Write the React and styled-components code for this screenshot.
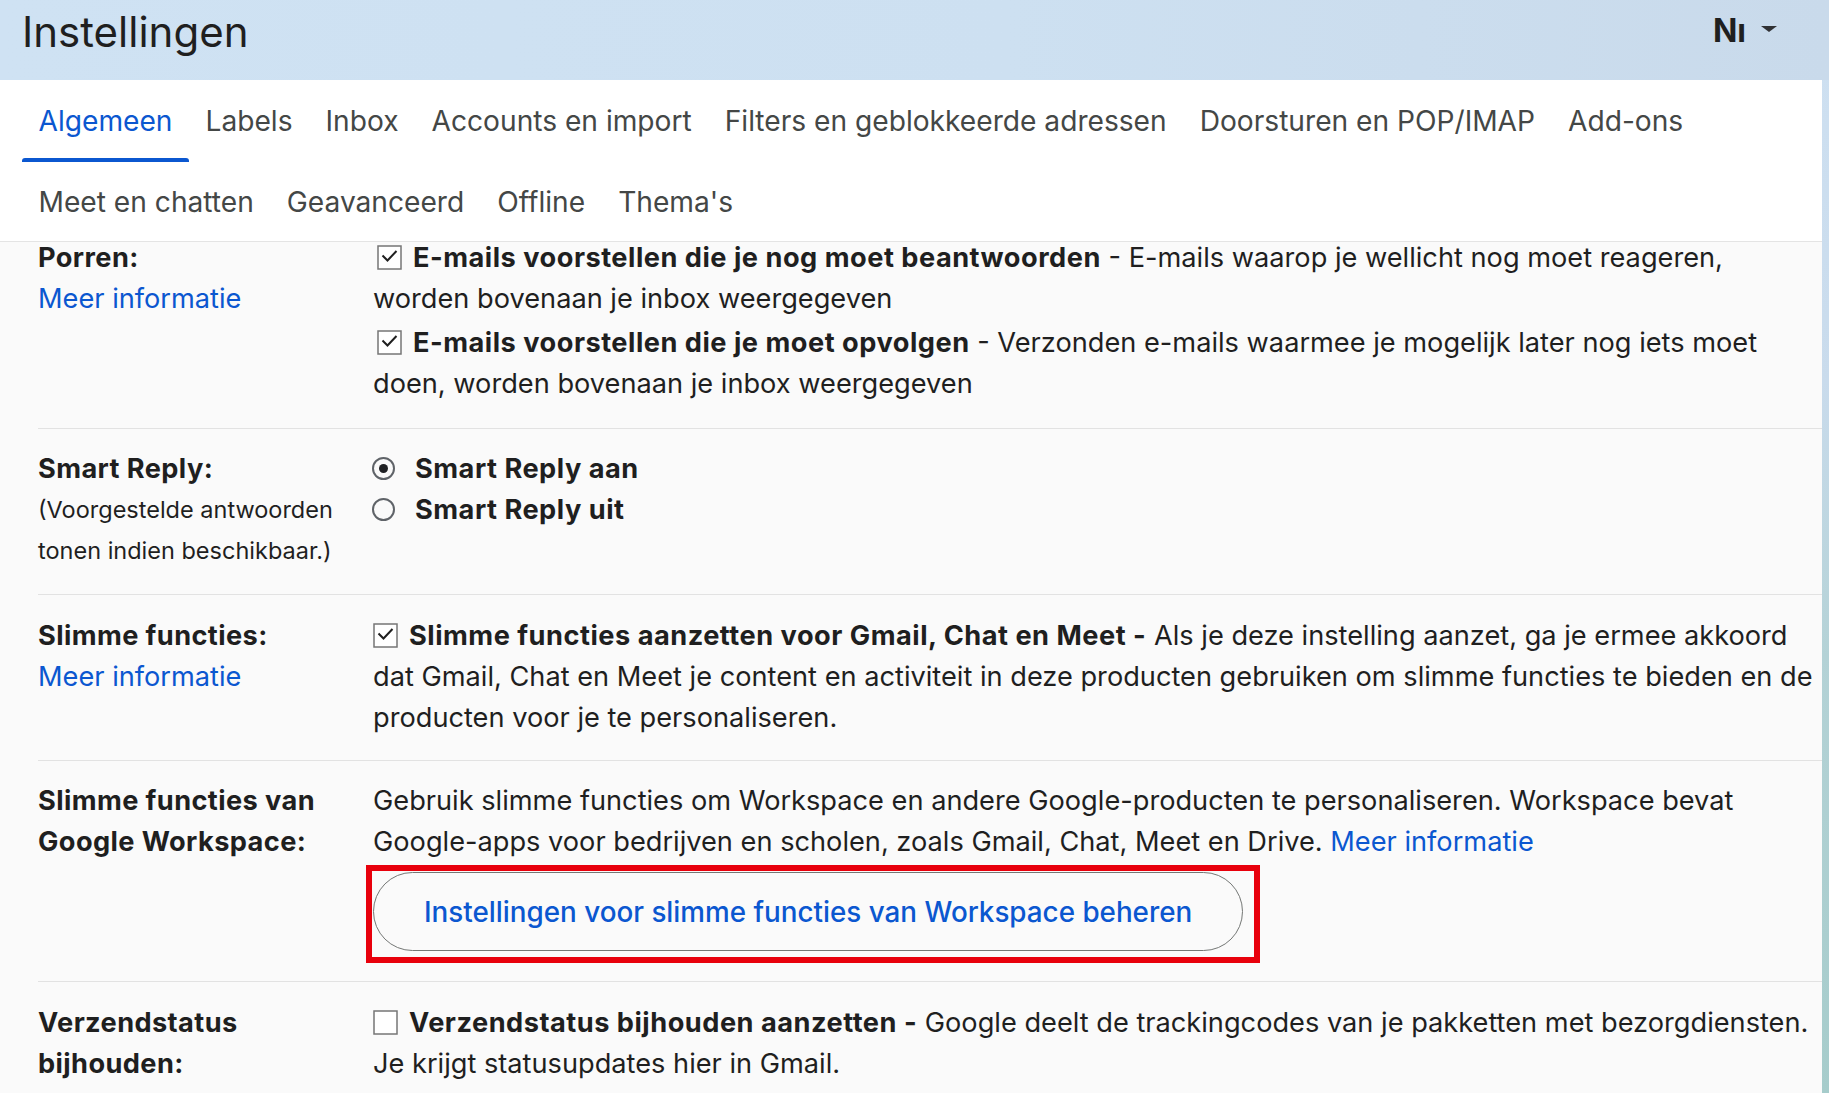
import React from 'react';
import styled, { createGlobalStyle } from 'styled-components';

const GlobalStyle = createGlobalStyle`
  html, body {
    margin: 0;
    padding: 0;
    height: 100%;
  }
  body {
    font-family: Inter, Roboto, "Noto Sans", sans-serif;
    color: #1f1f1f;
    overflow: hidden;
  }
  #root {
    height: 100%;
  }
`;

const Page = styled.div`
  display: flex;
  flex-direction: column;
  height: 100vh;
  background: linear-gradient(180deg, #cfe1f2 0%, #c9dbec 35%, #b4d2d6 60%, #a6cccb 100%);
`;

const Header = styled.header`
  flex: none;
  height: 80px;
  display: flex;
  align-items: flex-start;
  justify-content: space-between;
  padding: 0 52px 0 22px;
  background: linear-gradient(90deg, #cfe2f3 0%, #cde0f1 55%, #c9daeb 100%);
`;

const Title = styled.h1`
  margin: 0;
  padding-top: 11px;
  font-size: 42px;
  line-height: 42px;
  font-weight: 400;
  color: #1f1f1f;
`;

const Account = styled.div`
  display: flex;
  align-items: center;
  gap: 15px;
  padding-top: 13px;
  font-size: 32px;
  line-height: 36px;
  font-weight: 700;
  color: #1f1f1f;
`;

const Caret = styled.span`
  width: 0;
  height: 0;
  border-left: 8px solid transparent;
  border-right: 8px solid transparent;
  border-top: 6px solid #303134;
  margin-top: -4px;
`;

const Panel = styled.main`
  flex: 1;
  min-height: 0;
  margin-right: 7px;
  background: #fff;
  display: flex;
  flex-direction: column;
  overflow: hidden;
`;

const TabBar = styled.nav`
  flex: none;
  display: flex;
  flex-direction: column;
  padding-left: 22px;
  border-bottom: 1px solid #e4e4e4;
`;

const TabRow = styled.div`
  display: flex;
  height: ${(p) => p.$height}px;
`;

const Tab = styled.div`
  position: relative;
  display: flex;
  align-items: center;
  padding: 0 16.5px;
  font-size: 28.15px;
  color: ${(p) => (p.$active ? '#0b57d0' : '#444746')};
  white-space: nowrap;

  &::after {
    content: '';
    display: ${(p) => (p.$active ? 'block' : 'none')};
    position: absolute;
    left: 0;
    right: 0;
    bottom: 0;
    height: 4px;
    border-radius: 3px 3px 0 0;
    background: #0b57d0;
  }
`;

const Content = styled.section`
  flex: 1;
  min-height: 0;
  overflow: hidden;
  padding-left: 38px;
  background: #fafafa;
`;

const List = styled.div`
  margin-top: -5px;
`;

const Row = styled.div`
  display: grid;
  grid-template-columns: 335px 1fr;
  padding: ${(p) => p.$pad || '19px 0 23px'};
  border-bottom: 1px solid #e2e2e2;
  font-size: 27.2px;
  line-height: 41px;
`;

const Label = styled.div`
  display: flex;
  flex-direction: column;
  padding-right: 20px;
`;

const LabelTitle = styled.span`
  font-weight: 700;
  letter-spacing: 0.4px;
  color: #1f1f1f;
`;

const LabelNote = styled.span`
  font-size: 23.5px;
  color: #1f1f1f;
`;

const Link = styled.a`
  color: #0b57d0;
  text-decoration: none;
  cursor: pointer;
`;

const Value = styled.div`
  min-width: 0;
  padding-right: 4px;
  color: #1f1f1f;
`;

const Para = styled.p`
  margin: 0 0 ${(p) => p.$gap || 0}px;
`;

const B = styled.b`
  font-weight: 700;
  letter-spacing: 0.5px;
`;

const Box = styled.svg`
  display: inline-block;
  width: 25px;
  height: 25px;
  vertical-align: -3px;
  margin-left: ${(p) => p.$indent || 0}px;
  margin-right: 11px;
`;

const RadioLine = styled.label`
  display: flex;
  align-items: center;
  gap: 20px;
  font-weight: 700;
  letter-spacing: 0.5px;
`;

const Radio = styled.span`
  flex: none;
  width: 23px;
  height: 23px;
  box-sizing: border-box;
  margin-left: -1px;
  border: 2px solid #5f6368;
  border-radius: 50%;
  display: flex;
  align-items: center;
  justify-content: center;

  &::after {
    content: '';
    display: ${(p) => (p.$checked ? 'block' : 'none')};
    width: 9px;
    height: 9px;
    border-radius: 50%;
    background: #202124;
  }
`;

const ButtonWrap = styled.div`
  position: relative;
  display: inline-block;
  margin-top: 10px;
`;

const PillButton = styled.button`
  display: inline-flex;
  align-items: center;
  height: 79px;
  padding: 0 50px;
  box-sizing: border-box;
  border: 1px solid #747775;
  border-radius: 40px;
  background: transparent;
  font-family: inherit;
  font-size: 27.8px;
  font-weight: 500;
  color: #0b57d0;
  cursor: pointer;
`;

const Highlight = styled.span`
  position: absolute;
  left: -7px;
  top: -7px;
  right: -17px;
  bottom: -12px;
  border: 6px solid #e8000c;
  pointer-events: none;
`;

const Check = ({ checked, indent }) => (
  <Box viewBox="0 0 25 25" $indent={indent}>
    <rect x="1" y="1" width="23" height="23" fill="#fff" stroke="#767676" strokeWidth="1.5" />
    {checked && (
      <path d="M5.5 10.5 L10.5 15.5 L19.5 6" fill="none" stroke="#1f1f1f" strokeWidth="2" />
    )}
  </Box>
);

const tabsTop = ['Algemeen', 'Labels', 'Inbox', 'Accounts en import', 'Filters en geblokkeerde adressen', 'Doorsturen en POP/IMAP', 'Add-ons'];
const tabsBottom = ['Meet en chatten', 'Geavanceerd', 'Offline', "Thema's"];

export default function App() {
  return (
    <Page>
      <GlobalStyle />
      <Header>
        <Title>Instellingen</Title>
        <Account>
          Nı
          <Caret />
        </Account>
      </Header>
      <Panel>
        <TabBar>
          <TabRow $height={82}>
            {tabsTop.map((t, i) => (
              <Tab key={t} $active={i === 0}>{t}</Tab>
            ))}
          </TabRow>
          <TabRow $height={79}>
            {tabsBottom.map((t) => (
              <Tab key={t}>{t}</Tab>
            ))}
          </TabRow>
        </TabBar>
        <Content>
          <List>
            <Row $pad="0 0 24px">
              <Label>
                <LabelTitle>Porren:</LabelTitle>
                <Link>Meer informatie</Link>
              </Label>
              <Value>
                <Para $gap={3}>
                  <Check checked indent={4} />
                  <B>E-mails voorstellen die je nog moet beantwoorden</B> - E-mails waarop je wellicht nog moet reageren, worden bovenaan je inbox weergegeven
                </Para>
                <Para>
                  <Check checked indent={4} />
                  <B>E-mails voorstellen die je moet opvolgen</B> - Verzonden e-mails waarmee je mogelijk later nog iets moet doen, worden bovenaan je inbox weergegeven
                </Para>
              </Value>
            </Row>

            <Row>
              <Label>
                <LabelTitle>Smart Reply:</LabelTitle>
                <LabelNote>(Voorgestelde antwoorden</LabelNote>
                <LabelNote>tonen indien beschikbaar.)</LabelNote>
              </Label>
              <Value>
                <RadioLine>
                  <Radio $checked />
                  Smart Reply aan
                </RadioLine>
                <RadioLine>
                  <Radio />
                  Smart Reply uit
                </RadioLine>
              </Value>
            </Row>

            <Row $pad="20px 0 22px">
              <Label>
                <LabelTitle>Slimme functies:</LabelTitle>
                <Link>Meer informatie</Link>
              </Label>
              <Value>
                <Para>
                  <Check checked />
                  <B>Slimme functies aanzetten voor Gmail, Chat en Meet -</B> Als je deze instelling aanzet, ga je ermee akkoord dat Gmail, Chat en Meet je content en activiteit in deze producten gebruiken om slimme functies te bieden en de producten voor je te personaliseren.
                </Para>
              </Value>
            </Row>

            <Row $pad="19px 0 30px">
              <Label>
                <LabelTitle>Slimme functies van Google Workspace:</LabelTitle>
              </Label>
              <Value>
                <Para>
                  Gebruik slimme functies om Workspace en andere Google-producten te personaliseren. Workspace bevat Google-apps voor bedrijven en scholen, zoals Gmail, Chat, Meet en Drive. <Link>Meer informatie</Link>
                </Para>
                <ButtonWrap>
                  <PillButton>Instellingen voor slimme functies van Workspace beheren</PillButton>
                  <Highlight />
                </ButtonWrap>
              </Value>
            </Row>

            <Row $pad="20px 0 23px">
              <Label>
                <LabelTitle>Verzendstatus bijhouden:</LabelTitle>
                <Link>Meer informatie</Link>
              </Label>
              <Value>
                <Para>
                  <Check />
                  <B>Verzendstatus bijhouden aanzetten -</B> Google deelt de trackingcodes van je pakketten met bezorgdiensten. Je krijgt statusupdates hier in Gmail.
                </Para>
              </Value>
            </Row>
          </List>
        </Content>
      </Panel>
    </Page>
  );
}
